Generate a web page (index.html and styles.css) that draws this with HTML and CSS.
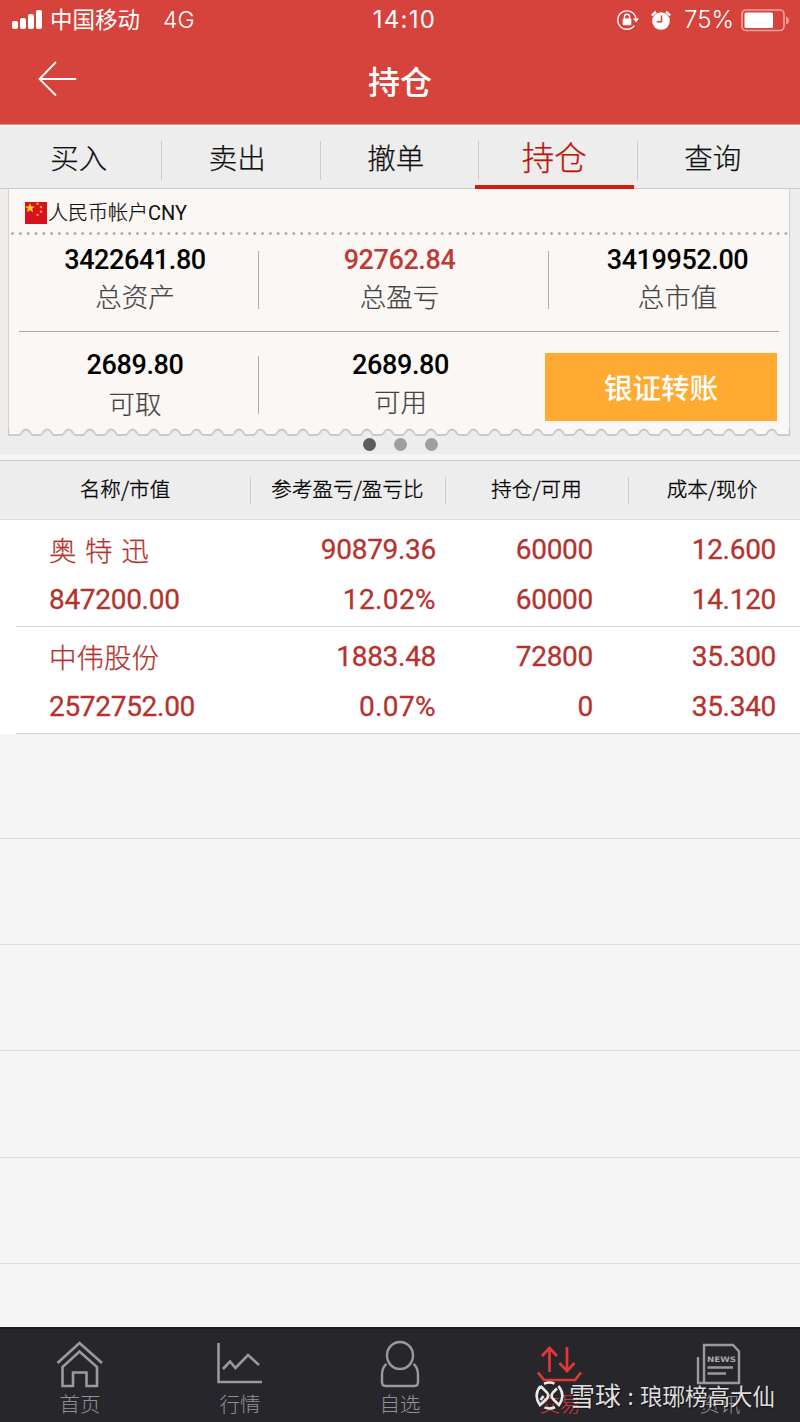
FILE: index.html
```html
<!DOCTYPE html>
<html lang="zh-CN">
<head>
<meta charset="utf-8">
<title>持仓</title>
<link rel="stylesheet" href="styles.css">
</head>
<body>
<div class="app">
  <header class="header">
    <div class="status">
      <div class="status-left">
        <svg class="signal" width="31" height="20" viewBox="0 0 31 20" fill="#fff"><rect x="0" y="11" width="6" height="8" rx="2"/><rect x="8" y="8" width="6" height="11" rx="2"/><rect x="16" y="4" width="6" height="15" rx="2"/><rect x="24" y="0" width="6" height="19" rx="2"/></svg>
        <span class="carrier">中国移动</span><span class="network">4G</span>
      </div>
      <div class="clock">14:10</div>
      <div class="status-right">
        <svg width="24" height="22" viewBox="0 0 24 22" fill="none" stroke="#fff" stroke-width="1.4"><path d="M18.3 16.6A9.2 9.2 0 1 1 20 9.5"/><path d="M17 9.5h6l-3 4z" fill="#fff" stroke="none"/><rect x="6.7" y="9.5" width="8.6" height="6.8" rx="1" fill="#fff" stroke="none"/><path d="M8.5 10V7.8a2.5 2.5 0 0 1 5 0V10"/></svg>
        <svg class="alarm" width="20" height="21" viewBox="0 0 20 21"><circle cx="10" cy="11" r="8.8" fill="#fff"/><path d="M.8 5.5L5 1.6M19.2 5.5L15 1.6" stroke="#fff" stroke-width="2.2"/><path d="M10.5 5.5v6.2H5.8" fill="none" stroke="#d6433c" stroke-width="1.5"/></svg>
        <span class="percent">75%</span>
        <svg width="49" height="23" viewBox="0 0 49 23"><rect x="1" y="1" width="42" height="20.5" rx="4" fill="none" stroke="#f0a19c" stroke-width="1.6"/><rect x="3.5" y="3.5" width="28.5" height="15.5" rx="1.5" fill="#fff"/><path d="M45 7.5q3 1 3 4t-3 4z" fill="#f0a19c"/></svg>
      </div>
    </div>
    <div class="titlebar">
      <svg class="back" width="40" height="36" viewBox="0 0 40 36" fill="none" stroke="#fff" stroke-width="1.8" stroke-linecap="round"><path d="M17.500 1.500L1.500 18l16 16M1.500 18h36"/></svg>
      <h1 class="title">持仓</h1>
    </div>
  </header>

  <nav class="tabs">
    <a class="tab">买入</a><a class="tab">卖出</a><a class="tab">撤单</a><a class="tab active">持仓</a><a class="tab">查询</a>
  </nav>

  <section class="summary">
    <div class="card">
      <div class="account">
        <svg width="22" height="22" viewBox="0 0 22 22"><rect width="22" height="22" fill="#d9101f"/><path fill="#ffd51c" d="M5 1l1.300 3.400 3.600.1-2.800 2.200 1 3.500L5 8.200l-3.100 2 1-3.500L.1 4.500l3.600-.1z"/><g fill="#f9a51c"><circle cx="12.5" cy="1.8" r="1.3"/><circle cx="16" cy="5" r="1.3"/><circle cx="16" cy="9.8" r="1.3"/><circle cx="12.5" cy="13" r="1.3"/></g></svg>
        <span>人民币帐户<span class="currency">CNY</span></span>
      </div>
      <div class="dots-line"></div>
      <div class="figures first">
        <div class="figure"><b class="num">3422641.80</b><span class="label">总资产</span></div>
        <div class="figure"><b class="num gain">92762.84</b><span class="label">总盈亏</span></div>
        <div class="figure"><b class="num">3419952.00</b><span class="label">总市值</span></div>
      </div>
      <div class="figures second">
        <div class="figure"><b class="num">2689.80</b><span class="label low">可取</span></div>
        <div class="figure"><b class="num">2689.80</b><span class="label">可用</span></div>
        <button class="transfer">银证转账</button>
      </div>
    </div>
    <svg class="scallop" width="784" height="9" viewBox="0 0 784 9">
      <defs><pattern id="wave" x="7.3" y="0" width="21.31" height="9" patternUnits="userSpaceOnUse"><path d="M0 0V6.500H4C6 6.500 6.300 1.300 10.650 1.300S15.300 6.500 17.300 6.500H21.400V0z" fill="#faf7f4"/><path d="M0 7H4C6.300 7 6.300 1.500 10.650 1.500S15 7 17.300 7H21.400" fill="none" stroke="#cbc8c7" stroke-width="1.800"/></pattern></defs>
      <rect width="782" height="9" fill="url(#wave)"/><path d="M0 0H11V6.500H0zM772 0H782V6.500H772z" fill="#faf7f4" class="corner"/><path d="M.5 0V7H11M772 7H781.500V0" fill="none" stroke="#cbc8c7" stroke-width="1.500"/>
    </svg>
    <div class="pager"><i class="dot current"></i><i class="dot"></i><i class="dot"></i></div>
  </section>

  <section class="holdings">
    <div class="columns">
      <span class="column">名称/市值</span><span class="column">参考盈亏/盈亏比</span><span class="column">持仓/可用</span><span class="column">成本/现价</span>
    </div>
    <div class="row">
      <div class="cell"><span class="stock spaced">奥 特 迅</span><span>847200.00</span></div>
      <div class="cell"><span>90879.36</span><span class="ratio">12.02%</span></div>
      <div class="cell"><span>60000</span><span>60000</span></div>
      <div class="cell"><span>12.600</span><span>14.120</span></div>
    </div>
    <div class="row">
      <div class="cell"><span class="stock">中伟股份</span><span>2572752.00</span></div>
      <div class="cell"><span>1883.48</span><span class="ratio">0.07%</span></div>
      <div class="cell"><span>72800</span><span>0</span></div>
      <div class="cell"><span>35.300</span><span>35.340</span></div>
    </div>
    <div class="blank short"></div><div class="blank"></div><div class="blank"></div><div class="blank tall"></div><div class="blank"></div>
  </section>

  <nav class="bottom">
    <a class="item"><svg width="48" height="48" viewBox="0 0 48 48" fill="none" stroke="#9a999c" stroke-width="2.6"><path d="M1.5 23L23.500 3 46 23M6.500 46V27L23.500 11.500 41 27V46H30.500V32.500H17V46z"/></svg><span>首页</span></a>
    <a class="item"><svg width="48" height="48" viewBox="0 0 48 48" fill="none" stroke="#9a999c" stroke-width="2.600"><path d="M2.500 3V42H46M7 29L14 21.500 19.500 28 32 15 43 25"/></svg><span>行情</span></a>
    <a class="item"><svg width="48" height="48" viewBox="0 0 48 48" fill="none" stroke="#9a999c" stroke-width="2.400"><ellipse cx="24" cy="15.500" rx="13" ry="13.500"/><path d="M10.500 24Q6 27.500 6 35V42Q6 46 9.500 46H38.500Q42 46 42 42V35Q42 27.500 37.500 24"/></svg><span>自选</span></a>
    <a class="item on"><svg width="48" height="48" viewBox="0 0 48 48" fill="none" stroke="#e23936" stroke-width="2.700"><path d="M13.500 32V8M6 16L13.500 8 21 16M31 7V31M23.500 23L31 31 38.500 23M2 32.500L8 40H39L45 32.500"/></svg><span>交易</span></a>
    <a class="item"><svg width="48" height="48" viewBox="0 0 48 48" fill="none" stroke="#9a999c" stroke-width="2.400"><path d="M8 43V5H37L43 11.500V43H2V17"/><path d="M11.500 27.500H37M11.500 33.500H30"/><text class="news" x="11" y="21.500" textLength="29" lengthAdjust="spacingAndGlyphs">NEWS</text></svg><span>资讯</span></a>
  </nav>

  <div class="watermark">
    <svg width="29" height="29" viewBox="0 0 29 29" fill="none" stroke="#e9e9ea" stroke-width="2.600"><path d="M9 2.800Q14.500.4 19.500 2.600M9.500 26.400Q14.500 28.600 20 26.200M5.500 5Q-2 14.500 5 24L12 17.500Q14.300 14.500 12 11.500L5.500 5M23.500 5Q31 14.500 24 24L18 18Q15.200 14.700 18 11.500L22 7.500M8.500 15L5.500 19"/></svg>
    <span class="brand">雪球</span><span class="colon">:</span><span>琅琊榜高大仙</span>
  </div>
</div>
</body>
</html>
```
FILE: styles.css
```css
* { box-sizing: border-box; }
body { margin: 0; font-family: "Noto Sans CJK SC", sans-serif; }
svg { display: block; flex: none; }
.app { position: relative; width: 800px; height: 1422px; overflow: hidden; background: #f5f5f5; display: flex; flex-direction: column; }

.header { height: 125px; flex: none; background: #d6433c; border-bottom: 1px solid #e98f89; color: #fff; }
.status { height: 40px; display: grid; grid-template-columns: 1fr 80px 1fr; align-items: center; font-family: Inter, "Noto Sans CJK SC", sans-serif; font-size: 23px; line-height: 40px; }
.status-left { display: flex; align-items: center; padding-left: 12px; }
.carrier { margin-left: 7px; font-size: 22.500px; }
.network { margin-left: 23px; font-size: 23px; font-weight: 300; }
.clock { text-align: center; font-size: 24px; letter-spacing: 1.300px; padding-left: 9px; white-space: nowrap; }
.status-right { display: flex; align-items: center; justify-content: flex-end; padding-right: 10px; }
.alarm { margin-left: 11px; }
.percent { margin: 0 7px 0 13px; font-size: 24px; font-weight: 300; }
.titlebar { height: 84px; display: grid; grid-template-columns: 1fr 80px 1fr; align-items: center; }
.back { margin: -6px 0 0 38px; }
.title { margin: -5px 0 0; font-size: 32px; font-weight: 500; line-height: 40px; text-align: center; }

.tabs { height: 64px; flex: none; display: flex; background: #ededed; border-top: 2px solid #f6f6f6; border-bottom: 1px solid #ccc; }
.tab { position: relative; left: -.5px; width: 158.500px; height: 62px; line-height: 60px; text-align: center; font-size: 28.500px; font-weight: 300; color: #111; -webkit-text-stroke: .25px; }
.tab:not(:last-child)::after { content: ""; position: absolute; right: -4px; top: 14px; width: 1px; height: 39px; background: #ccc; }
.tab.active { color: #bb180b; font-size: 32.500px; line-height: 58px; border-bottom: 4px solid #d61b0c; }

.summary { height: 271px; flex: none; padding-left: 8px; background: #ededed; border-bottom: 6px solid #f6f6f6; }
.card { width: 782px; height: 239px; background: #faf7f4; border-left: 1px solid #d2d0d0; border-right: 1px solid #d2d0d0; }
.account { height: 43px; display: flex; align-items: center; padding: 4px 0 0 16px; gap: 1px; font-size: 20px; line-height: 30px; font-weight: 300; color: #111; -webkit-text-stroke: .25px; }
.currency { font-family: Roboto, sans-serif; font-weight: 400; font-size: 20px; -webkit-text-stroke: 0; }
.dots-line { height: 3px; margin-left: 2px; background: radial-gradient(circle at 1.500px 1.500px, #aaa7a5 1.200px, transparent 1.500px) 0 0 / 7.820px 3px repeat-x; }
.figures { display: grid; grid-template-columns: 250px 290px 1fr; }
.figure { display: flex; flex-direction: column; align-items: center; position: relative; }
.num { font-family: Roboto, sans-serif; font-size: 27px; line-height: 30px; font-weight: 500; letter-spacing: -.4px; color: #000; }
.num.gain { color: #be3c38; }
.label { margin-top: 3px; font-size: 26.500px; line-height: 36px; font-weight: 300; color: #444; -webkit-text-stroke: .2px; }
.label.low { margin-top: 5px; }
.first { height: 97px; margin: 0 10px; padding-top: 10px; grid-template-columns: 240px 290px 1fr; border-bottom: 1px solid #a9a7a6; }
.first .figure:first-child { padding-right: 8px; }
.first .figure:nth-child(2) { padding-right: 9px; }
.first .figure:nth-child(3) { padding-left: 27px; }
.figure:first-child::after, .first .figure:nth-child(2)::after { content: ""; position: absolute; right: 0; top: 6px; width: 1px; height: 58px; background: #b1aeac; }
.second { padding-top: 18px; }
.second .figure:first-child { padding-left: 2px; }
.second .figure:nth-child(2) { padding-right: 7px; }
.transfer { width: 232px; height: 68px; margin: 3px 0 0 -4px; padding: 0; border: 0; background: #ffaa30; color: #fff; font: 500 28.500px/68px "Noto Sans CJK SC", sans-serif; }
.pager { display: flex; justify-content: center; gap: 18px; padding: 1px 8px 0 0; }
.dot { width: 13px; height: 13px; border-radius: 50%; background: #a09f9f; }
.dot.current { background: #5f5c5d; }

.columns { height: 60px; display: grid; grid-template-columns: 250px 195px 183px 172px; background: #ededed; border-top: 1px solid #ccc; border-bottom: 1px solid #ddd; }
.column { position: relative; text-align: center; font-size: 20.500px; font-weight: 300; -webkit-text-stroke: .35px; letter-spacing: .1px; line-height: 54px; color: #000; white-space: nowrap; }
.column:last-child { padding-right: 4px; }
.column:not(:last-child)::after { content: ""; position: absolute; right: -1px; top: 16px; width: 1px; height: 27px; background: #ccc; }
.row { height: 107px; display: grid; grid-template-columns: 250px 186px 157px 183px; background: linear-gradient(#d6d6d6, #d6d6d6) 16px 100% / 100% 1px no-repeat #fff; }
.cell { display: flex; flex-direction: column; text-align: right; padding-top: 5px; font-family: Roboto, "Noto Sans CJK SC", sans-serif; font-size: 28px; line-height: 50px; font-weight: 400; color: #b5332f; letter-spacing: -.3px; -webkit-text-stroke: .3px; }
.cell:first-child { text-align: left; padding-left: 49px; }
.ratio { letter-spacing: .4px; }
.stock { font-family: "Noto Sans CJK SC", sans-serif; font-size: 27.500px; font-weight: 300; line-height: 48px; padding-bottom: 2px; letter-spacing: 0; -webkit-text-stroke: .25px; white-space: nowrap; }
.spaced { word-spacing: 2.500px; }
.blank { height: 106px; border-bottom: 1px solid #ddd; }
.blank.short { height: 105px; }
.blank.tall { height: 107px; }

.bottom { height: 95px; margin-top: auto; flex: none; display: grid; grid-template-columns: repeat(5, 1fr); background: #27262b; border-top: 2px solid #1b1a1e; }
.item { display: flex; flex-direction: column; align-items: center; padding-top: 11px; color: #929195; }
.item span { font-size: 20.500px; line-height: 30px; font-weight: 300; }
.item.on { color: #d93431; }
.news { font: 700 7.500px "DejaVu Sans", sans-serif; fill: #aaa9ac; stroke: none; }
.watermark { position: absolute; left: 535px; top: 1380px; display: flex; align-items: center; height: 30px; font-size: 22.500px; line-height: 30px; font-weight: 400; color: #dededf; text-shadow: 1px 1px 1px #111; white-space: nowrap; }
.brand { margin-left: 5px; font-size: 26px; }
.colon { width: 19px; text-align: center; }
```
